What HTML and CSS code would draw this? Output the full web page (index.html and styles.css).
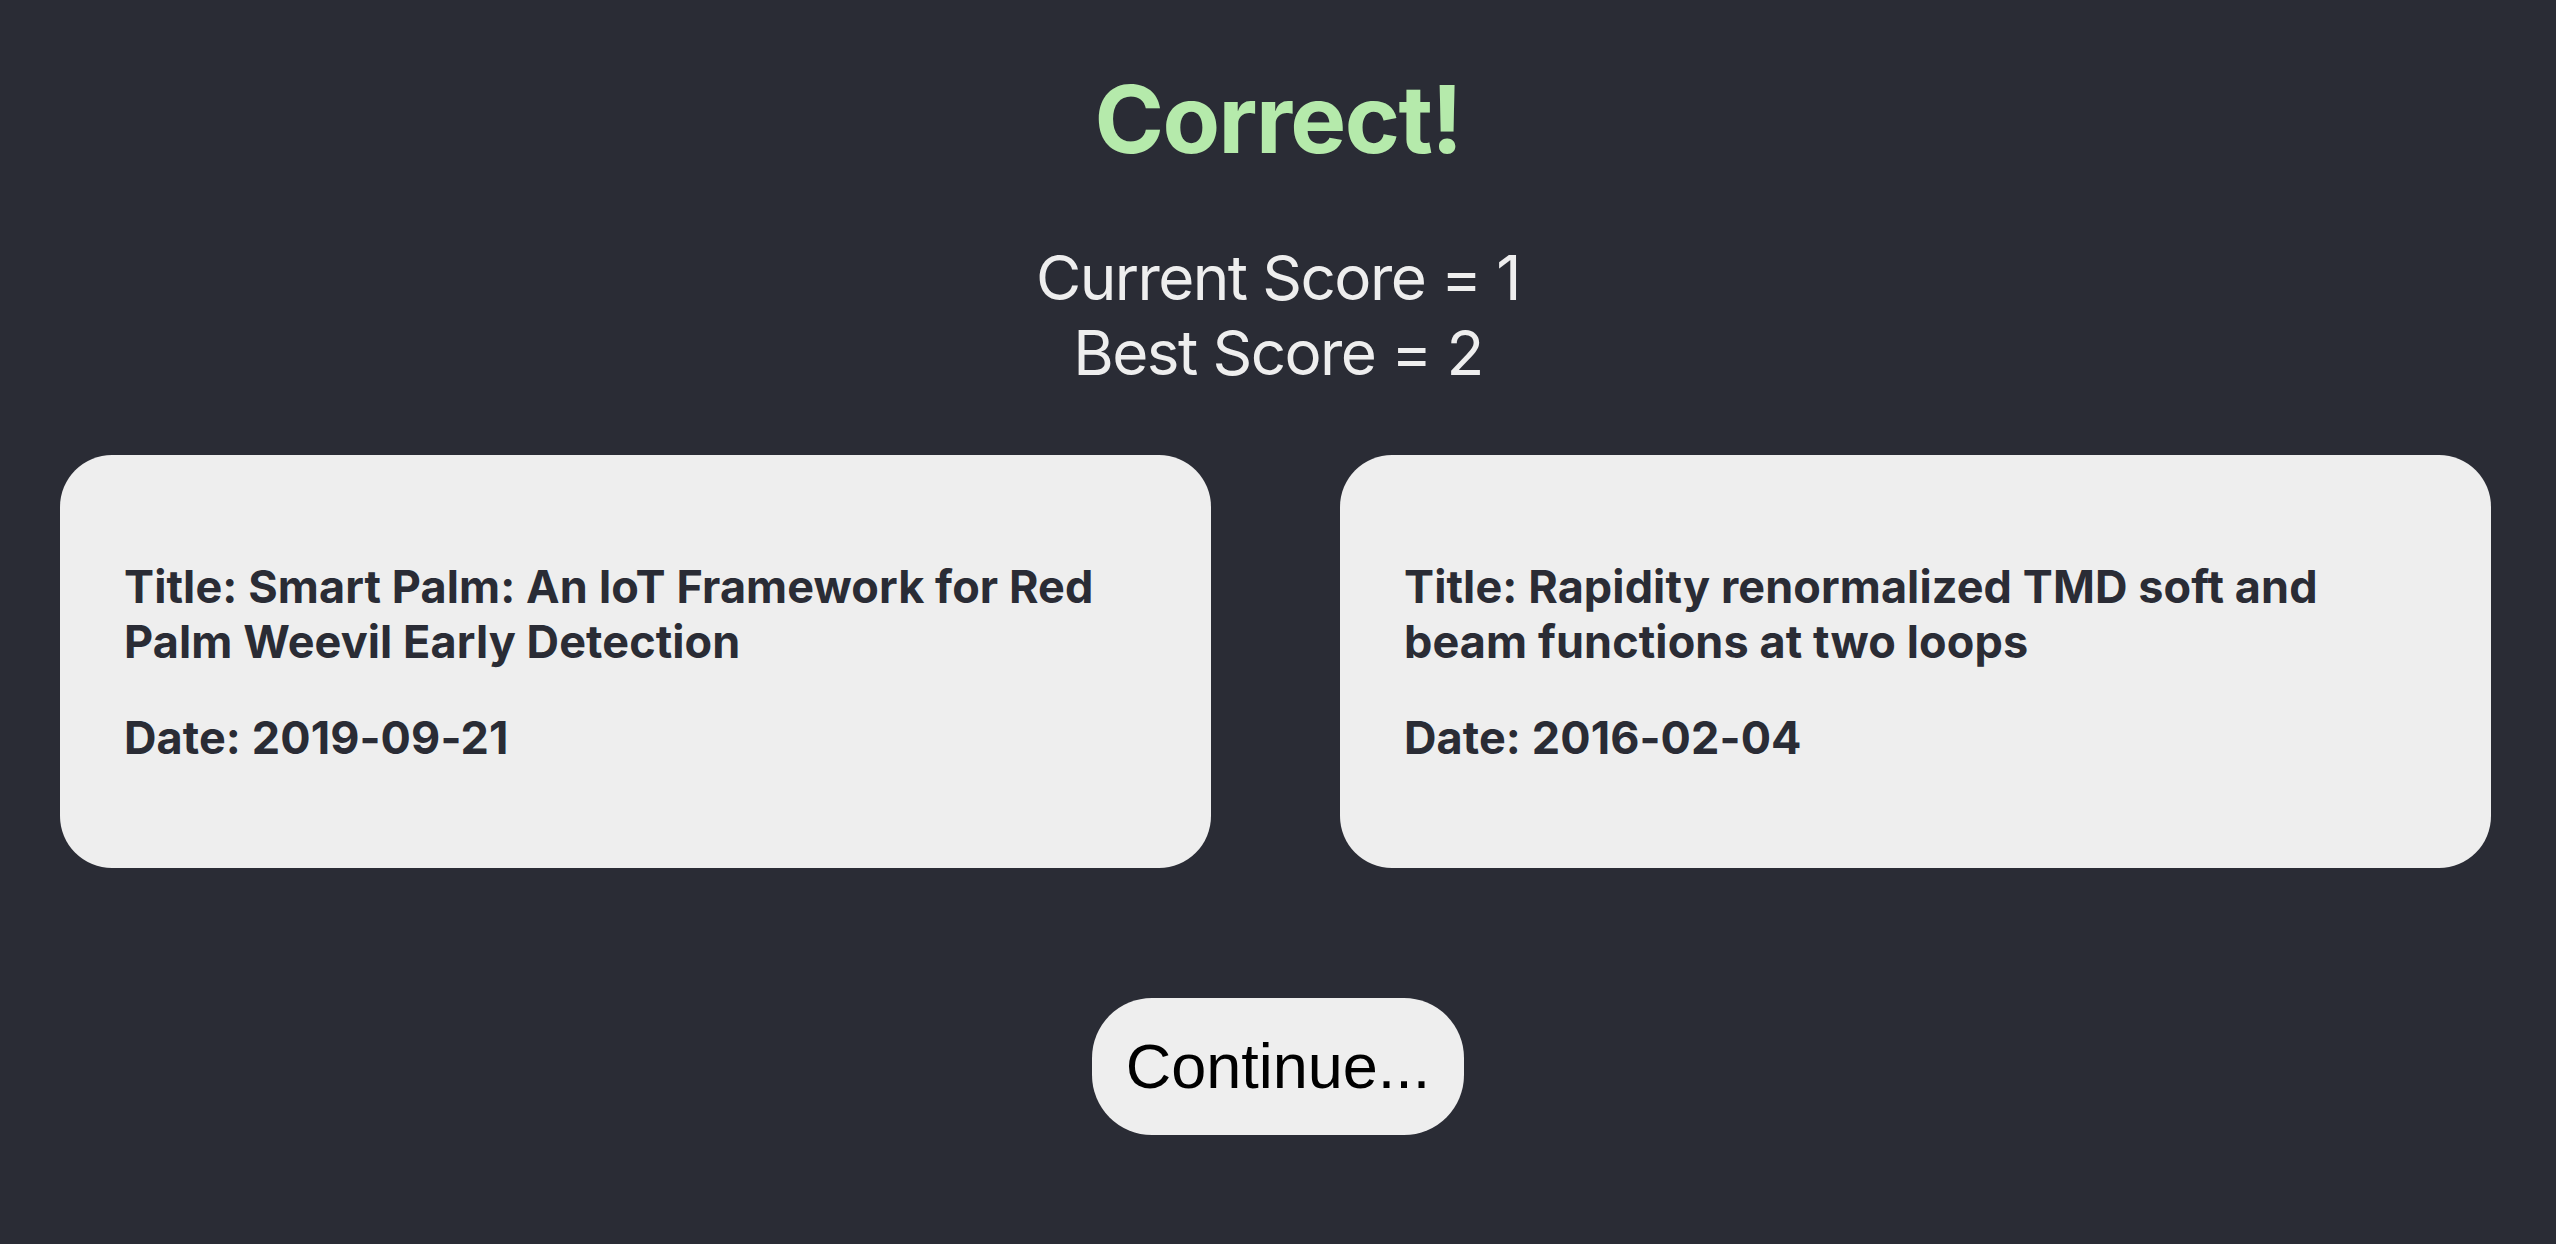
FILE: index.html
```html
<!DOCTYPE html>
<html lang="en">
<head>
<meta charset="utf-8">
<title>Correct!</title>
<link rel="stylesheet" href="styles.css">
</head>
<body>
<main class="app">
  <h1 class="result">Correct!</h1>
  <div class="scores">
    <div class="score-line">Current Score = 1</div>
    <div class="score-line">Best Score = 2</div>
  </div>
  <section class="cards">
    <article class="card">
      <p class="card-line">Title: Smart Palm: An IoT Framework for Red Palm Weevil Early Detection</p>
      <p class="card-line">Date: 2019-09-21</p>
    </article>
    <article class="card">
      <p class="card-line">Title: Rapidity renormalized TMD soft and beam functions at two loops</p>
      <p class="card-line">Date: 2016-02-04</p>
    </article>
  </section>
  <div class="actions">
    <button class="continue" type="button">Continue...</button>
  </div>
</main>
</body>
</html>
```

FILE: styles.css
```css
html, body {
  margin: 0;
  padding: 0;
  background: #2a2c35;
}
body {
  min-height: 1244px;
  font-family: Inter, "Noto Sans", sans-serif;
  color: #eeeeee;
}
.app {
  display: flex;
  flex-direction: column;
  align-items: center;
  padding-top: 62px;
}
.result {
  margin: 0;
  font-size: 94px;
  line-height: 114px;
  font-weight: 700;
  color: #b5eaab;
  letter-spacing: -1.6px;
}
.scores {
  margin-top: 64px;
  display: flex;
  flex-direction: column;
  align-items: center;
  font-size: 62px;
  line-height: 75px;
  font-weight: 400;
  letter-spacing: -1.6px;
}
.cards {
  align-self: stretch;
  display: flex;
  gap: 129px;
  padding: 0 65px 0 60px;
  margin-top: 65px;
}
.card {
  flex: 1 1 0;
  background: #eeeeee;
  border-radius: 52px;
  padding: 104px 64px 103px;
  color: #2a2c35;
}
.card-line {
  margin: 0;
  font-size: 45px;
  line-height: 55px;
  font-weight: 700;
  letter-spacing: 0.1px;
}
.card-line + .card-line {
  margin-top: 41px;
}
.actions {
  margin-top: 130px;
}
.continue {
  font-family: "Liberation Sans", Arial, sans-serif;
  font-size: 63px;
  line-height: 72px;
  padding: 32px 34px 33px;
  border: none;
  border-radius: 60px;
  background: #eeeeee;
  color: #000000;
}
```
